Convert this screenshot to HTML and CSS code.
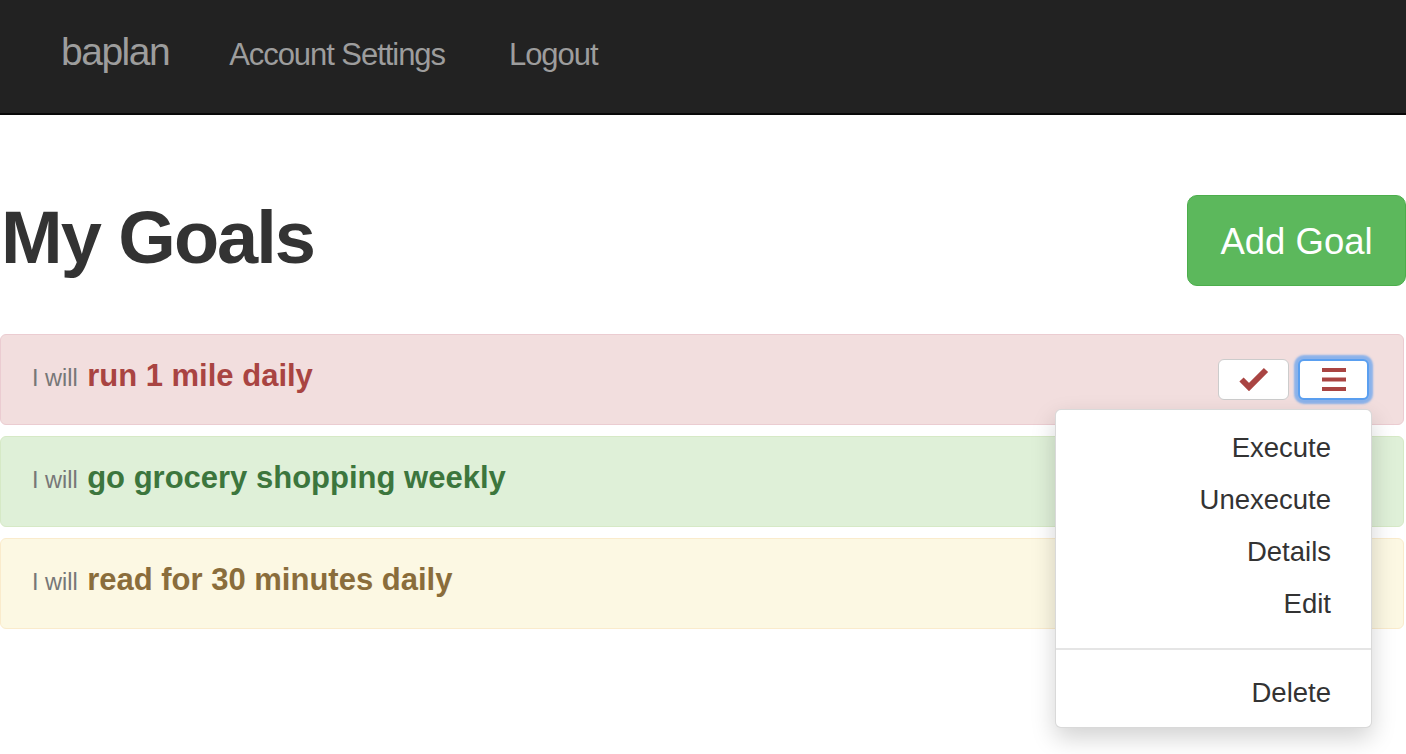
FILE: index.html
```html
<!DOCTYPE html>
<html lang="en">
<head>
<meta charset="utf-8">
<title>baplan - My Goals</title>
<link rel="stylesheet" href="styles.css">
</head>
<body>
<nav class="navbar">
  <a class="brand" href="#">baplan</a>
  <a class="nav-link" href="#">Account Settings</a>
  <a class="nav-link" href="#">Logout</a>
</nav>
<main class="page">
  <header class="page-header">
    <h1 class="title">My Goals</h1>
    <button class="btn-add" type="button">Add Goal</button>
  </header>
  <ul class="goals">
    <li class="goal goal-danger">
      <p class="goal-text"><span class="lead-in">I will</span> <span class="goal-name">run 1 mile daily</span></p>
      <div class="actions">
        <button class="btn-icon" type="button" aria-label="Execute">
          <svg width="30" height="24" viewBox="0 0 30 24"><path d="M2.5 12.5 L10 20 L27 3" fill="none" stroke="#a94442" stroke-width="6"/></svg>
        </button>
        <button class="btn-icon btn-focus" type="button" aria-label="Menu">
          <svg width="24" height="23" viewBox="0 0 24 23"><rect x="0" y="0" width="24" height="4" fill="#a94442"/><rect x="0" y="9.5" width="24" height="4" fill="#a94442"/><rect x="0" y="19" width="24" height="4" fill="#a94442"/></svg>
        </button>
        <ul class="dropdown">
          <li class="dd-item">Execute</li>
          <li class="dd-item">Unexecute</li>
          <li class="dd-item">Details</li>
          <li class="dd-item">Edit</li>
          <li class="dd-divider"></li>
          <li class="dd-item">Delete</li>
        </ul>
      </div>
    </li>
    <li class="goal goal-success">
      <p class="goal-text"><span class="lead-in">I will</span> <span class="goal-name">go grocery shopping weekly</span></p>
    </li>
    <li class="goal goal-warning">
      <p class="goal-text"><span class="lead-in">I will</span> <span class="goal-name">read for 30 minutes daily</span></p>
    </li>
  </ul>
</main>
</body>
</html>
```

FILE: styles.css
```css
* { box-sizing: border-box; }
html, body { margin: 0; padding: 0; }
body {
  font-family: "Liberation Sans", Arial, sans-serif;
  color: #333;
  background: #fff;
  min-height: 754px;
}
.navbar {
  display: flex;
  align-items: baseline;
  height: 115px;
  padding-top: 32px;
  padding-left: 61px;
  background: #222;
  border-bottom: 2px solid #080808;
}
.brand {
  font-size: 39px;
  line-height: 39px;
  letter-spacing: -1.5px;
  color: #9d9d9d;
  text-decoration: none;
  margin-right: 28px;
}
.nav-link {
  font-size: 31px;
  line-height: 31px;
  letter-spacing: -1.05px;
  color: #9d9d9d;
  text-decoration: none;
  padding: 0 32px;
}
.page { padding: 0 2px 0 0; }
.page-header {
  display: flex;
  justify-content: space-between;
  align-items: flex-start;
  padding-top: 80px;
  margin-right: -2px;
}
.title {
  margin: 2px 0 0 1px;
  font-size: 74px;
  line-height: 81px;
  font-weight: 700;
  letter-spacing: -2px;
  color: #333;
}
.btn-add {
  width: 219px;
  height: 91px;
  font-family: inherit;
  font-size: 36.5px;
  color: #fff;
  background: #5cb85c;
  border: 1px solid #4cae4c;
  border-radius: 10px;
  padding: 3px 0 0;
}
.goals {
  list-style: none;
  margin: 48px 0 0;
  padding: 0;
  display: flex;
  flex-direction: column;
  gap: 11px;
}
.goal {
  display: flex;
  align-items: center;
  justify-content: space-between;
  height: 91px;
  padding: 0 34px 0 31px;
  border: 1px solid;
  border-radius: 6px;
}
.goal-text { margin: 0; padding-bottom: 7px; }
.lead-in { font-size: 23.5px; color: #777; }
.goal-name { font-size: 31px; font-weight: 700; margin-left: 5px; }
.goal-danger { background: #f2dede; border-color: #ebccd1; color: #a94442; position: relative; z-index: 2; }
.goal-success { background: #dff0d8; border-color: #d6e9c6; color: #3c763d; }
.goal-warning { background: #fcf8e3; border-color: #faebcc; color: #8a6d3b; }
.actions {
  position: relative;
  display: flex;
  gap: 9px;
  margin-top: -1px;
}
.btn-icon {
  display: flex;
  align-items: center;
  justify-content: center;
  width: 71px;
  height: 41px;
  padding: 0;
  background: #fff;
  border: 1px solid #ccc;
  border-radius: 6px;
}
.btn-focus {
  border: 2px solid #5a9ff0;
  box-shadow: 0 0 2px 4px rgba(95, 160, 240, 0.7);
}
.dropdown {
  position: absolute;
  top: calc(100% + 9px);
  right: -3px;
  width: 317px;
  margin: 0;
  padding: 12px 0 8px;
  list-style: none;
  background: #fff;
  border: 1px solid rgba(0, 0, 0, 0.15);
  border-radius: 6px;
  box-shadow: 0 10px 24px rgba(0, 0, 0, 0.18);
  z-index: 10;
}
.dd-item {
  height: 52px;
  line-height: 52px;
  padding-right: 40px;
  text-align: right;
  font-size: 27.5px;
  color: #333;
}
.dd-divider {
  height: 2px;
  margin: 18px 0 17px;
  background: #e5e5e5;
}
```
